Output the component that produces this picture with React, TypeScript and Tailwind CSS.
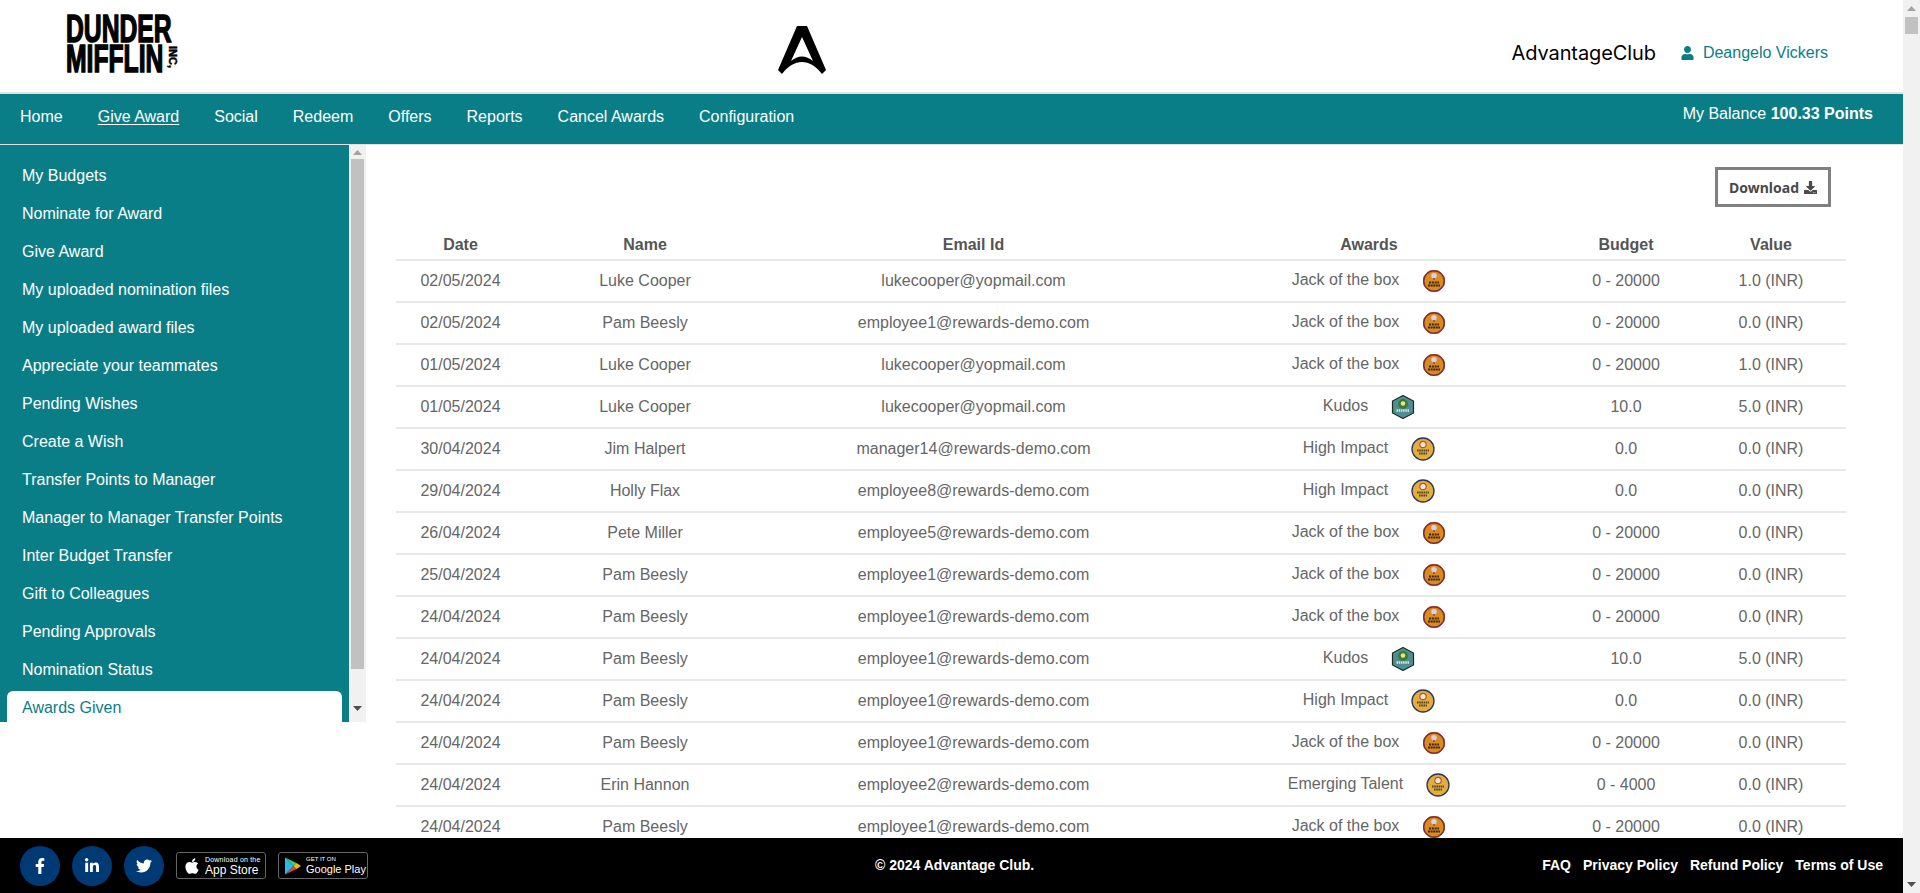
import { FaApple, FaDownload, FaFacebookF, FaLinkedinIn, FaTwitter, FaUser } from 'react-icons/fa'

const NAV_ITEMS = ['Home', 'Give Award', 'Social', 'Redeem', 'Offers', 'Reports', 'Cancel Awards', 'Configuration']

const SIDE_ITEMS = [
  'My Budgets',
  'Nominate for Award',
  'Give Award',
  'My uploaded nomination files',
  'My uploaded award files',
  'Appreciate your teammates',
  'Pending Wishes',
  'Create a Wish',
  'Transfer Points to Manager',
  'Manager to Manager Transfer Points',
  'Inter Budget Transfer',
  'Gift to Colleagues',
  'Pending Approvals',
  'Nomination Status',
  'Awards Given',
]

type Award = 'jack' | 'kudos' | 'impact' | 'talent'

const AWARD_NAMES: Record<Award, string> = {
  jack: 'Jack of the box',
  kudos: 'Kudos',
  impact: 'High Impact',
  talent: 'Emerging Talent',
}

const ROWS: { date: string; name: string; email: string; award: Award; budget: string; value: string }[] = [
  { date: '02/05/2024', name: 'Luke Cooper', email: 'lukecooper@yopmail.com', award: 'jack', budget: '0 - 20000', value: '1.0 (INR)' },
  { date: '02/05/2024', name: 'Pam Beesly', email: 'employee1@rewards-demo.com', award: 'jack', budget: '0 - 20000', value: '0.0 (INR)' },
  { date: '01/05/2024', name: 'Luke Cooper', email: 'lukecooper@yopmail.com', award: 'jack', budget: '0 - 20000', value: '1.0 (INR)' },
  { date: '01/05/2024', name: 'Luke Cooper', email: 'lukecooper@yopmail.com', award: 'kudos', budget: '10.0', value: '5.0 (INR)' },
  { date: '30/04/2024', name: 'Jim Halpert', email: 'manager14@rewards-demo.com', award: 'impact', budget: '0.0', value: '0.0 (INR)' },
  { date: '29/04/2024', name: 'Holly Flax', email: 'employee8@rewards-demo.com', award: 'impact', budget: '0.0', value: '0.0 (INR)' },
  { date: '26/04/2024', name: 'Pete Miller', email: 'employee5@rewards-demo.com', award: 'jack', budget: '0 - 20000', value: '0.0 (INR)' },
  { date: '25/04/2024', name: 'Pam Beesly', email: 'employee1@rewards-demo.com', award: 'jack', budget: '0 - 20000', value: '0.0 (INR)' },
  { date: '24/04/2024', name: 'Pam Beesly', email: 'employee1@rewards-demo.com', award: 'jack', budget: '0 - 20000', value: '0.0 (INR)' },
  { date: '24/04/2024', name: 'Pam Beesly', email: 'employee1@rewards-demo.com', award: 'kudos', budget: '10.0', value: '5.0 (INR)' },
  { date: '24/04/2024', name: 'Pam Beesly', email: 'employee1@rewards-demo.com', award: 'impact', budget: '0.0', value: '0.0 (INR)' },
  { date: '24/04/2024', name: 'Pam Beesly', email: 'employee1@rewards-demo.com', award: 'jack', budget: '0 - 20000', value: '0.0 (INR)' },
  { date: '24/04/2024', name: 'Erin Hannon', email: 'employee2@rewards-demo.com', award: 'talent', budget: '0 - 4000', value: '0.0 (INR)' },
  { date: '24/04/2024', name: 'Pam Beesly', email: 'employee1@rewards-demo.com', award: 'jack', budget: '0 - 20000', value: '0.0 (INR)' },
]

function AwardBadge({ award }: { award: Award }) {
  if (award === 'kudos') {
    return (
      <svg width="24" height="24" viewBox="0 0 24 24" className="shrink-0">
        <path d="M12 .5 22.500 6v12L12 23.500 1.500 18V6z" fill="#4f8f94" stroke="#1b2b20" strokeWidth="1.200" />
        <circle cx="12" cy="9" r="5" fill="#3d7a2c" />
        <circle cx="12" cy="8.500" r="2.300" fill="#e8e2a0" />
        <line x1="5.500" y1="15.500" x2="18.500" y2="15.500" stroke="#d5e6e6" strokeWidth="2.600" strokeDasharray="1.500 .7" />
      </svg>
    )
  }
  if (award === 'jack') {
    return (
      <svg width="24" height="24" viewBox="0 0 24 24" className="shrink-0">
        <path d="M8 1h8l7 7v8l-7 7H8l-7-7V8z" fill="#e8b27a" />
        <circle cx="12" cy="12" r="10.300" fill="#d98b1e" stroke="#7a2f3a" strokeWidth="1.500" />
        <circle cx="12" cy="6.800" r="2.800" fill="#dccbe6" />
        <rect x="11" y="9" width="2" height="2" fill="#8a5a8a" />
        <line x1="7" y1="13.500" x2="17" y2="13.500" stroke="#3d2410" strokeWidth="1.800" strokeDasharray="2 .8" />
        <line x1="6" y1="16.500" x2="18" y2="16.500" stroke="#3d2410" strokeWidth="1.800" strokeDasharray="2 .6" />
      </svg>
    )
  }
  return (
    <svg width="24" height="24" viewBox="0 0 24 24" className="shrink-0">
      <circle cx="12" cy="12" r="11" fill="#e3ae3a" stroke="#2a3560" strokeWidth="1.300" />
      <circle cx="12" cy="7.500" r="3.200" fill="#f3e7d0" stroke="#b5523f" strokeWidth="1.200" />
      <line x1="6" y1="13.500" x2="18" y2="13.500" stroke="#54452a" strokeWidth="1.800" strokeDasharray="1.600 .6" />
      <line x1="8" y1="16.500" x2="16" y2="16.500" stroke="#54452a" strokeWidth="1.800" strokeDasharray="1.600 .6" />
    </svg>
  )
}

function ScrollArrow({ up, color }: { up?: boolean; color: string }) {
  return (
    <svg width="9" height="5" viewBox="0 0 9 5">
      <path d={up ? 'M4.500 0 9 5H0z' : 'M0 0h9L4.500 5z'} fill={color} />
    </svg>
  )
}

function GooglePlayIcon() {
  return (
    <svg width="16" height="18" viewBox="0 0 16 18" className="shrink-0">
      <path d="M0 .500v17L8.500 9z" fill="#2bb8f0" />
      <path d="M0 .500 8.500 9 11.500 6z" fill="#35d07a" />
      <path d="M0 17.500 8.500 9 11.500 12z" fill="#ea4335" />
      <path d="M11.500 6 16 9l-4.500 3L8.500 9z" fill="#fbbc04" />
    </svg>
  )
}

function DunderLogo() {
  return (
    <div className="relative w-[115px] h-[60px] -mt-[4px] text-black font-bold">
      <div className="text-[38px] leading-[30px] origin-left scale-x-[0.65] [-webkit-text-stroke:1.5px_black] whitespace-nowrap">
        DUNDER
        <br />
        MIFFLIN
      </div>
      <div className="absolute left-[112px] top-[32px] text-[11px] leading-[11px] rotate-90 origin-top-left whitespace-nowrap [-webkit-text-stroke:0.5px_black]">
        INC,
      </div>
    </div>
  )
}

export default function App() {
  return (
    <div className="flex h-screen overflow-hidden bg-white font-['Liberation_Sans',Arial,sans-serif]">
      <div className="flex-1 min-w-0 flex flex-col">
        <header className="h-[94px] shrink-0 border-b-2 border-[#e2e2e2] flex items-center pl-[66px] pr-[75px]">
          <DunderLogo />
          <div className="ml-[597px] mt-[8px]">
            <svg width="48" height="48" viewBox="0 0 48 48">
              <path
                fillRule="evenodd"
                d="M19 0h10l19 44-4 4c-6-8-13-12-20-12S10 40 4 48l-4-4zM24 11 13 35c4-3 7-4.500 11-4.500S31 32 35 35z"
                fill="#000"
              />
            </svg>
          </div>
          <div className="ml-auto mt-[14px] flex items-center">
            <span className="font-['Inter',sans-serif] text-[20px] leading-none text-black tracking-[-0.1px]">AdvantageClub</span>
            <span className="ml-[25px] flex items-center text-[#0a7e87] text-[16px]">
              <FaUser className="w-[13px] h-[14px]" />
              <span className="ml-[9px]">Deangelo Vickers</span>
            </span>
          </div>
        </header>

        <nav className="h-[51px] shrink-0 bg-[#0a7e87] border-b border-[#e2e2e2] flex text-white text-[16px] pl-[20px] pr-[30px]">
          <div className="flex gap-[35px] pt-[11px]">
            {NAV_ITEMS.map(item => (
              <a key={item} className={item === 'Give Award' ? 'underline underline-offset-2' : ''}>
                {item}
              </a>
            ))}
          </div>
          <div className="ml-auto pt-[8px]">
            My Balance <span className="font-bold">100.33 Points</span>
          </div>
        </nav>

        <div className="flex-1 min-h-0 flex">
          <aside className="w-[366px] shrink-0 h-[577px] flex">
            <div className="w-[349px] bg-[#0a7e87] pt-[8px] text-[16px] text-white overflow-hidden">
              {SIDE_ITEMS.map(item => (
                <div
                  key={item}
                  className={
                    item === 'Awards Given'
                      ? 'h-[32px] mt-[6px] ml-[7px] mr-[7px] pl-[15px] pt-[1px] flex items-center bg-white text-[#0a7e87] rounded-t-[6px]'
                      : 'h-[32px] mt-[6px] pl-[22px] pt-[2px] flex items-center'
                  }
                >
                  {item}
                </div>
              ))}
            </div>
            <div className="w-[17px] bg-[#f1f1f1] flex flex-col items-center">
              <div className="h-[14px] flex items-center justify-center">
                <ScrollArrow up color="#a3a3a3" />
              </div>
              <div className="w-[13px] h-[510px] bg-[#c1c1c1]" />
              <div className="flex-1 flex items-center justify-center pt-[26px]">
                <ScrollArrow color="#505050" />
              </div>
            </div>
          </aside>

          <main className="flex-1 min-w-0 overflow-hidden pl-[30px] pr-[57px] pt-[22px]">
            <div className="flex justify-end pr-[15px]">
              <button className="w-[116px] h-[40px] border-[3px] border-[#808080] flex items-center justify-center gap-[5px] font-['Noto_Sans',sans-serif] font-bold text-[14px] text-[#4a4a4a]">
                Download <FaDownload className="w-[13px] h-[13px]" />
              </button>
            </div>
            <table className="w-[1450px] mt-[21px] table-fixed border-separate border-spacing-0 text-[16px] text-[#666]">
              <colgroup>
                <col className="w-[129px]" />
                <col className="w-[240px]" />
                <col className="w-[417px]" />
                <col className="w-[374px]" />
                <col className="w-[140px]" />
                <col className="w-[150px]" />
              </colgroup>
              <thead>
                <tr className="h-[33px] text-[#555] font-bold">
                  {['Date', 'Name', 'Email Id', 'Awards', 'Budget', 'Value'].map(h => (
                    <th key={h} className="border-b-2 border-[#e8e8e8] text-center font-bold pt-[3px]">
                      {h}
                    </th>
                  ))}
                </tr>
              </thead>
              <tbody>
                {ROWS.map((row, i) => (
                  <tr key={i} className="h-[42px] text-center">
                    <td className="border-b-2 border-[#e8e8e8]">{row.date}</td>
                    <td className="border-b-2 border-[#e8e8e8]">{row.name}</td>
                    <td className="border-b-2 border-[#e8e8e8]">{row.email}</td>
                    <td className="border-b-2 border-[#e8e8e8]">
                      <div className="flex items-center justify-center gap-[23px]">
                        <span className="-mt-[2px]">{AWARD_NAMES[row.award]}</span>
                        <AwardBadge award={row.award} />
                      </div>
                    </td>
                    <td className="border-b-2 border-[#e8e8e8]">{row.budget}</td>
                    <td className="border-b-2 border-[#e8e8e8]">{row.value}</td>
                  </tr>
                ))}
              </tbody>
            </table>
          </main>
        </div>

        <footer className="relative h-[55px] shrink-0 bg-black text-white flex items-center pl-[20px] pr-[20px]">
          <div className="flex gap-[12px]">
            {[FaFacebookF, FaLinkedinIn, FaTwitter].map((Icon, i) => (
              <span key={i} className="w-[40px] h-[40px] rounded-full bg-[#003a75] flex items-center justify-center">
                <Icon className="w-[16px] h-[16px]" />
              </span>
            ))}
          </div>
          <div className="ml-[12px] w-[90px] h-[27px] border border-[#666] rounded-[3px] flex items-center pl-[7px] gap-[5px]">
            <FaApple className="w-[16px] h-[18px] shrink-0" />
            <div className="flex flex-col whitespace-nowrap">
              <span className="text-[7px] leading-[8px] tracking-[0.2px]">Download on the</span>
              <span className="text-[12px] leading-[12px]">App Store</span>
            </div>
          </div>
          <div className="ml-[12px] w-[90px] h-[27px] border border-[#666] rounded-[3px] flex items-center pl-[6px] gap-[5px]">
            <GooglePlayIcon />
            <div className="flex flex-col whitespace-nowrap">
              <span className="text-[6px] leading-[7px]">GET IT ON</span>
              <span className="text-[11px] leading-[12px]">Google Play</span>
            </div>
          </div>
          <span className="absolute left-[875px] text-[14px] font-bold">© 2024 Advantage Club.</span>
          <div className="ml-auto flex gap-[12px] text-[14px] font-bold">
            <a>FAQ</a>
            <a>Privacy Policy</a>
            <a>Refund Policy</a>
            <a>Terms of Use</a>
          </div>
        </footer>
      </div>

      <div className="w-[17px] shrink-0 bg-[#f1f1f1] flex flex-col items-center">
        <div className="h-[17px] flex items-center justify-center">
          <ScrollArrow up color="#a3a3a3" />
        </div>
        <div className="w-[13px] h-[17px] bg-[#c1c1c1]" />
        <div className="flex-1 flex items-end justify-center pb-[6px]">
          <ScrollArrow color="#505050" />
        </div>
      </div>
    </div>
  )
}
